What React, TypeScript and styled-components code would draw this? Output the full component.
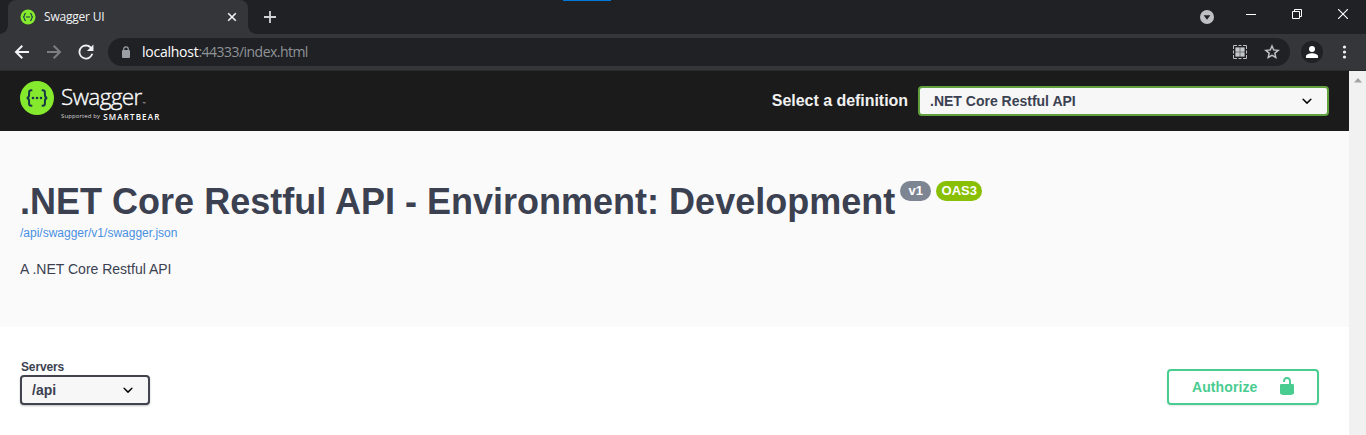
import React from "react";
import styled, { createGlobalStyle } from "styled-components";

const Global = createGlobalStyle`
  * { box-sizing: border-box; }
  html, body { margin: 0; height: 435px; overflow: hidden; background: #fff; }
  body { font-family: "Liberation Sans", Arial, sans-serif; color: #3b4151; }
  svg { display: block; flex: none; }
`;

const Window = styled.div`
  width: 1366px;
  height: 435px;
  display: flex;
  flex-direction: column;
  overflow: hidden;
`;

const TabStrip = styled.div`
  position: relative;
  height: 34px;
  flex: none;
  background: #202124;
  display: flex;
  padding-left: 8px;
`;

const LoadMark = styled.div`
  position: absolute;
  left: 563px;
  top: 0;
  width: 48px;
  height: 1px;
  background: #0078d7;
`;

const Tab = styled.div`
  position: relative;
  width: 240px;
  height: 34px;
  border-radius: 8px 8px 0 0;
  background: #35363a;
  display: flex;
  align-items: center;
  padding: 0 11px 0 12px;
  &::before, &::after {
    content: "";
    position: absolute;
    bottom: 0;
    width: 8px;
    height: 8px;
  }
  &::before { left: -8px; background: radial-gradient(circle at 0 0, #202124 7.5px, #35363a 8px); }
  &::after { right: -8px; background: radial-gradient(circle at 100% 0, #202124 7.5px, #35363a 8px); }
`;

const TabTitle = styled.span`
  flex: 1;
  margin-left: 8px;
  font: 12px/16px "Open Sans", "Noto Sans", sans-serif;
  letter-spacing: -0.2px;
  color: #f1f3f4;
`;

const NewTab = styled.div`
  padding: 10px 0 0 15px;
  flex: 1;
`;

const WindowControls = styled.div`
  display: flex;
  padding: 8px 18px 0 0;
`;

const Control = styled.div<{ $gap?: number; $drop?: number }>`
  margin-left: ${(p) => p.$gap ?? 0}px;
  padding-top: ${(p) => p.$drop ?? 0}px;
`;

const Toolbar = styled.div`
  height: 37px;
  flex: none;
  background: #35363a;
  border-bottom: 1px solid #2b2b2e;
  display: flex;
  align-items: center;
  padding-left: 14px;
`;

const NavButtons = styled.div`
  display: flex;
  flex: none;
  gap: 16px;
  width: 94px;
`;

const AddressBar = styled.div`
  width: 1182px;
  flex: none;
  height: 28px;
  border-radius: 14px;
  background: #202124;
  display: flex;
  align-items: center;
  padding: 0 10px 0 13px;
`;

const Url = styled.span`
  flex: 1;
  margin-left: 11px;
  font: 14px/18px "Open Sans", "Noto Sans", sans-serif;
  letter-spacing: -0.53px;
  color: #8f9398;
  b { font-weight: 400; color: #fff; letter-spacing: -0.25px; }
`;

const BarIcons = styled.div`
  display: flex;
  gap: 16px;
`;

const Avatar = styled.div`
  width: 22px;
  height: 22px;
  flex: none;
  margin-left: 11px;
  border-radius: 50%;
  background: #202124;
  display: flex;
  align-items: center;
  justify-content: center;
`;

const MenuIcon = styled.div`
  margin-left: 12px;
`;

const Viewport = styled.div`
  flex: 1;
  display: flex;
  min-height: 0;
`;

const Page = styled.main`
  width: 1349px;
  background: #fff;
`;

const Scrollbar = styled.div`
  width: 17px;
  background: #f1f1f1;
  display: flex;
  justify-content: center;
  padding-top: 7px;
`;

const Topbar = styled.header`
  height: 60px;
  background: #1b1b1b;
  display: flex;
  align-items: center;
  justify-content: space-between;
  padding: 0 20px;
`;

const Brand = styled.a`
  display: flex;
  align-items: flex-start;
  height: 40px;
`;

const BrandText = styled.div`
  display: flex;
  flex-direction: column;
  margin-left: 7px;
  color: #fff;
  font-family: "Open Sans", sans-serif;
`;

const BrandName = styled.span`
  font-size: 22.5px;
  line-height: 26px;
  margin-top: 3px;
  font-weight: 300;
  letter-spacing: -0.6px;
  -webkit-text-stroke: 0.35px #fff;
  height: 27px;
  small { font-size: 4px; letter-spacing: 0; margin-left: 1px; -webkit-text-stroke: 0; }
`;

const BrandOwner = styled.span`
  display: flex;
  align-items: center;
  height: 10px;
  white-space: nowrap;
  font-size: 6px;
  letter-spacing: 0.12px;
  color: #d5d5d5;
  b { font-size: 8px; font-weight: 600; letter-spacing: 1.15px; margin-left: 3px; color: #fff; }
`;

const Definition = styled.label`
  display: flex;
  align-items: center;
  font-size: 16px;
  font-weight: 700;
  color: #f0f0f0;
`;

const DefinitionText = styled.span`
  margin-right: 10px;
  letter-spacing: -0.04px;
`;

const Select = styled.div<{ $width: number; $border: string; $shadow?: boolean }>`
  width: ${(p) => p.$width}px;
  height: 30px;
  border: 2px solid ${(p) => p.$border};
  border-radius: 4px;
  background: #f7f7f7;
  box-shadow: ${(p) => (p.$shadow ? "0 1px 2px rgba(0,0,0,.25)" : "none")};
  display: flex;
  align-items: center;
  justify-content: space-between;
  padding: 0 10px;
  font-size: 14px;
  font-weight: 700;
  letter-spacing: 0;
  color: #3b4151;
`;

const Info = styled.section`
  height: 196px;
  background: #fafafa;
  padding: 49px 20px 0;
`;

const Title = styled.h2`
  margin: 0;
  height: 44px;
  display: flex;
  align-items: flex-start;
  font-size: 36px;
  line-height: 44px;
  font-weight: 700;
  white-space: nowrap;
  letter-spacing: 0.01px;
`;

const Badges = styled.span`
  display: flex;
  gap: 5px;
  margin: 1px 0 0 5px;
  letter-spacing: 0;
`;

const Badge = styled.span<{ $bg: string; $width: number }>`
  width: ${(p) => p.$width}px;
  height: 20px;
  border-radius: 10px;
  background: ${(p) => p.$bg};
  color: #fff;
  font-size: 13px;
  line-height: 20px;
  text-align: center;
`;

const SpecLink = styled.a`
  display: block;
  font-size: 12px;
  line-height: 18px;
  color: #4990e2;
`;

const Description = styled.p`
  margin: 19px 0 0;
  font-size: 14px;
  line-height: 16px;
`;

const Scheme = styled.section`
  height: 108px;
  padding: 33px 30px 0 20px;
  display: flex;
  justify-content: space-between;
`;

const ServersLabel = styled.div`
  font-size: 12px;
  line-height: 14px;
  font-weight: 700;
  letter-spacing: -0.15px;
  padding-left: 1px;
  margin-bottom: 1px;
`;

const Authorize = styled.button`
  width: 152px;
  height: 36px;
  margin-top: 9px;
  padding: 0 20px 0 23px;
  border: 2px solid #49cc90;
  border-radius: 4px;
  background: transparent;
  box-shadow: 0 1px 2px rgba(0, 0, 0, 0.1);
  color: #49cc90;
  font: 700 14px "Liberation Sans", Arial, sans-serif;
  letter-spacing: 0.1px;
  display: flex;
  align-items: center;
  justify-content: space-between;
  svg { margin-bottom: 2px; }
`;

const SwaggerMark = ({ size, ink }: { size: number; ink: string }) => (
  <svg width={size} height={size} viewBox="0 0 34 34">
    <circle cx="17" cy="17" r="17" fill="#85ea2d" />
    <g fill="none" stroke={ink} strokeWidth="2">
      <path d="M12.3 9.3h-1c-1.5 0-2.2.8-2.2 2.2v2.6c0 1.8-.8 2.6-2.2 2.9 1.4.3 2.2 1.1 2.2 2.9v2.6c0 1.5.7 2.2 2.2 2.2h1" />
      <path d="M21.7 9.3h1c1.5 0 2.2.8 2.2 2.2v2.6c0 1.8.8 2.6 2.2 2.9-1.4.3-2.2 1.1-2.2 2.9v2.6c0 1.5-.7 2.2-2.2 2.2h-1" />
    </g>
    <g fill={ink}>
      <circle cx="13" cy="17" r="1.3" />
      <circle cx="17" cy="17" r="1.3" />
      <circle cx="21" cy="17" r="1.3" />
    </g>
  </svg>
);

const Chevron = () => (
  <svg width="20" height="20" viewBox="0 0 20 20">
    <path d="M13.418 7.859a.695.695 0 0 1 .978 0 .68.68 0 0 1 0 .969l-3.908 3.83a.697.697 0 0 1-.979 0l-3.908-3.83a.68.68 0 0 1 0-.969.695.695 0 0 1 .978 0L10 11l3.418-3.141z" />
  </svg>
);

const ArrowBack = ({ color, flip }: { color: string; flip?: boolean }) => (
  <svg width="16" height="16" viewBox="0 0 16 16" fill="none" stroke={color} strokeWidth="2">
    <path d={flip ? "M1 8h13M7.7 1.7 14 8l-6.3 6.3" : "M15 8H2M8.3 1.7 2 8l6.3 6.3"} />
  </svg>
);

const BrowserTabs = () => (
  <TabStrip>
    <LoadMark />
    <Tab>
      <svg width="16" height="16" viewBox="0 0 16 16">
        <circle cx="8" cy="8" r="7.5" fill="#85ea2d" />
        <g fill="none" stroke="#173647" strokeWidth="1.1">
          <path d="M6 4.5c-1.3 0-1.6.4-1.6 1.5S4.2 8 3 8c1.2 0 1.4.9 1.4 2s.3 1.5 1.6 1.5M10 4.5c1.3 0 1.6.4 1.6 1.5s.2 2 1.4 2c-1.2 0-1.4.9-1.4 2s-.3 1.5-1.6 1.5M6 8h4" />
        </g>
      </svg>
      <TabTitle>Swagger UI</TabTitle>
      <svg width="10" height="10" viewBox="0 0 10 10" stroke="#f1f3f4" strokeWidth="1.6">
        <path d="m1.2 1.2 7.6 7.6M8.8 1.2 1.2 8.8" />
      </svg>
    </Tab>
    <NewTab>
      <svg width="14" height="14" viewBox="0 0 14 14" stroke="#d0d2d5" strokeWidth="1.8">
        <path d="M7 1v12M1 7h12" />
      </svg>
    </NewTab>
    <WindowControls>
      <Control $drop={2}>
        <svg width="14" height="14" viewBox="0 0 14 14">
          <circle cx="7" cy="7" r="7" fill="#bdc1c6" />
          <path d="M3.6 5.2h6.8L7 9.8z" fill="#202124" />
        </svg>
      </Control>
      <Control $gap={32}>
        <svg width="10" height="12" viewBox="0 0 10 12" fill="#fff"><path d="M0 6h10v1H0z" /></svg>
      </Control>
      <Control $gap={36} $drop={1}>
        <svg width="10" height="10" viewBox="0 0 10 10" fill="none" stroke="#fff">
          <path d="M.5 2.5h7v7h-7zM2.5 2.5v-2h7v7h-2" />
        </svg>
      </Control>
      <Control $gap={36} $drop={1}>
        <svg width="10" height="10" viewBox="0 0 10 10" stroke="#fff" strokeWidth="1.1">
          <path d="m0 0 10 10M10 0 0 10" />
        </svg>
      </Control>
    </WindowControls>
  </TabStrip>
);

const BrowserToolbar = () => (
  <Toolbar>
    <NavButtons>
      <ArrowBack color="#f1f3f4" />
      <ArrowBack color="#7d7e82" flip />
      <svg width="16" height="16" viewBox="3.4 3.4 17.2 17.2" fill="#f1f3f4">
        <path d="M17.65 6.35A7.96 7.96 0 0 0 12 4a8 8 0 1 0 7.73 10h-2.08A6 6 0 1 1 12 6c1.66 0 3.14.69 4.22 1.78L13 11h7V4z" />
      </svg>
    </NavButtons>
    <AddressBar>
      <svg width="10" height="13" viewBox="0 0 10 13">
        <rect x="1" y="4" width="8" height="8" rx="1" fill="#9aa0a6" />
        <path d="M2.7 5V3.2a2.3 2.3 0 0 1 4.6 0V5" fill="none" stroke="#9aa0a6" strokeWidth="1.2" />
      </svg>
      <Url><b>localhost</b>:44333/index.html</Url>
      <BarIcons>
        <svg width="16" height="16" viewBox="0 0 16 16">
          <path d="M1.5 5V1.5H5M6.5 1.5h3M11 1.5h3.5V5M14.5 6.5v3M14.5 11v3.5H11M9.5 14.5h-3M5 14.5H1.5V11M1.5 9.5v-3" fill="none" stroke="#bdc1c6" />
          <path d="M3.5 3.5h9v9h-9z" fill="#74777b" />
          <path d="M3.5 3.5h4v4h-4zM8.500 3.500h4v4h-4zM3.500 8.500h4v4h-4zM8.500 8.500h4v4h-4z" fill="#c4c7ca" />
        </svg>
        <svg width="16" height="16" viewBox="1.5 1.5 21 21" fill="#c7cacd" stroke="#c7cacd" strokeWidth="0.3">
          <path d="m22 9.240-7.190-.62L12 2 9.190 8.630 2 9.240l5.460 4.730L5.820 21 12 17.270 18.180 21l-1.630-7.030zM12 15.400l-3.760 2.270 1-4.280-3.320-2.880 4.380-.38L12 6.100l1.710 4.040 4.380.38-3.320 2.880 1 4.280z" />
        </svg>
      </BarIcons>
    </AddressBar>
    <Avatar>
      <svg width="12" height="12" viewBox="0 0 12 12" fill="#fff">
        <circle cx="6" cy="3" r="3" />
        <path d="M0 12v-1.700C0 8.300 3.500 7.300 6 7.300s6 1 6 3V12z" />
      </svg>
    </Avatar>
    <MenuIcon>
      <svg width="18" height="14" viewBox="0 0 18 14" fill="#f1f3f4">
        <circle cx="9.5" cy="2" r="1.6" />
        <circle cx="9.5" cy="7" r="1.6" />
        <circle cx="9.5" cy="12" r="1.6" />
      </svg>
    </MenuIcon>
  </Toolbar>
);

export default function App() {
  return (
    <Window>
      <Global />
      <BrowserTabs />
      <BrowserToolbar />
      <Viewport>
        <Page>
          <Topbar>
            <Brand>
              <SwaggerMark size={34} ink="#173647" />
              <BrandText>
                <BrandName>Swagger<small>™</small></BrandName>
                <BrandOwner>Supported by <b>SMARTBEAR</b></BrandOwner>
              </BrandText>
            </Brand>
            <Definition>
              <DefinitionText>Select a definition</DefinitionText>
              <Select $width={411} $border="#62a03f">
                .NET Core Restful API
                <Chevron />
              </Select>
            </Definition>
          </Topbar>
          <Info>
            <Title>
              .NET Core Restful API - Environment: Development
              <Badges>
                <Badge $bg="#7d8492" $width={31}>v1</Badge>
                <Badge $bg="#89bf04" $width={46}>OAS3</Badge>
              </Badges>
            </Title>
            <SpecLink>/api/swagger/v1/swagger.json</SpecLink>
            <Description>A .NET Core Restful API</Description>
          </Info>
          <Scheme>
            <div>
              <ServersLabel>Servers</ServersLabel>
              <Select $width={130} $border="#41444e" $shadow>
                /api
                <Chevron />
              </Select>
            </div>
            <Authorize>
              Authorize
              <svg width="20" height="20" viewBox="0 0 20 20" fill="#49cc90">
                <path d="M15.8 8H14V5.6C14 2.703 12.665 1 10 1 7.334 1 6 2.703 6 5.6V6h2v-.801C8 3.754 8.797 3 10 3c1.203 0 2 .754 2 2.199V8H4c-.553 0-1 .646-1 1.199V17c0 .549.428 1.139.951 1.307l1.197.387C5.672 18.861 6.55 19 7.1 19h5.8c.549 0 1.428-.139 1.951-.307l1.196-.387c.524-.167.953-.757.953-1.306V9.199C17 8.646 16.352 8 15.8 8z" />
              </svg>
            </Authorize>
          </Scheme>
        </Page>
        <Scrollbar>
          <svg width="8" height="5" viewBox="0 0 8 5" fill="#a3a3a3"><path d="M4 0 8 4.5H0z" /></svg>
        </Scrollbar>
      </Viewport>
    </Window>
  );
}
